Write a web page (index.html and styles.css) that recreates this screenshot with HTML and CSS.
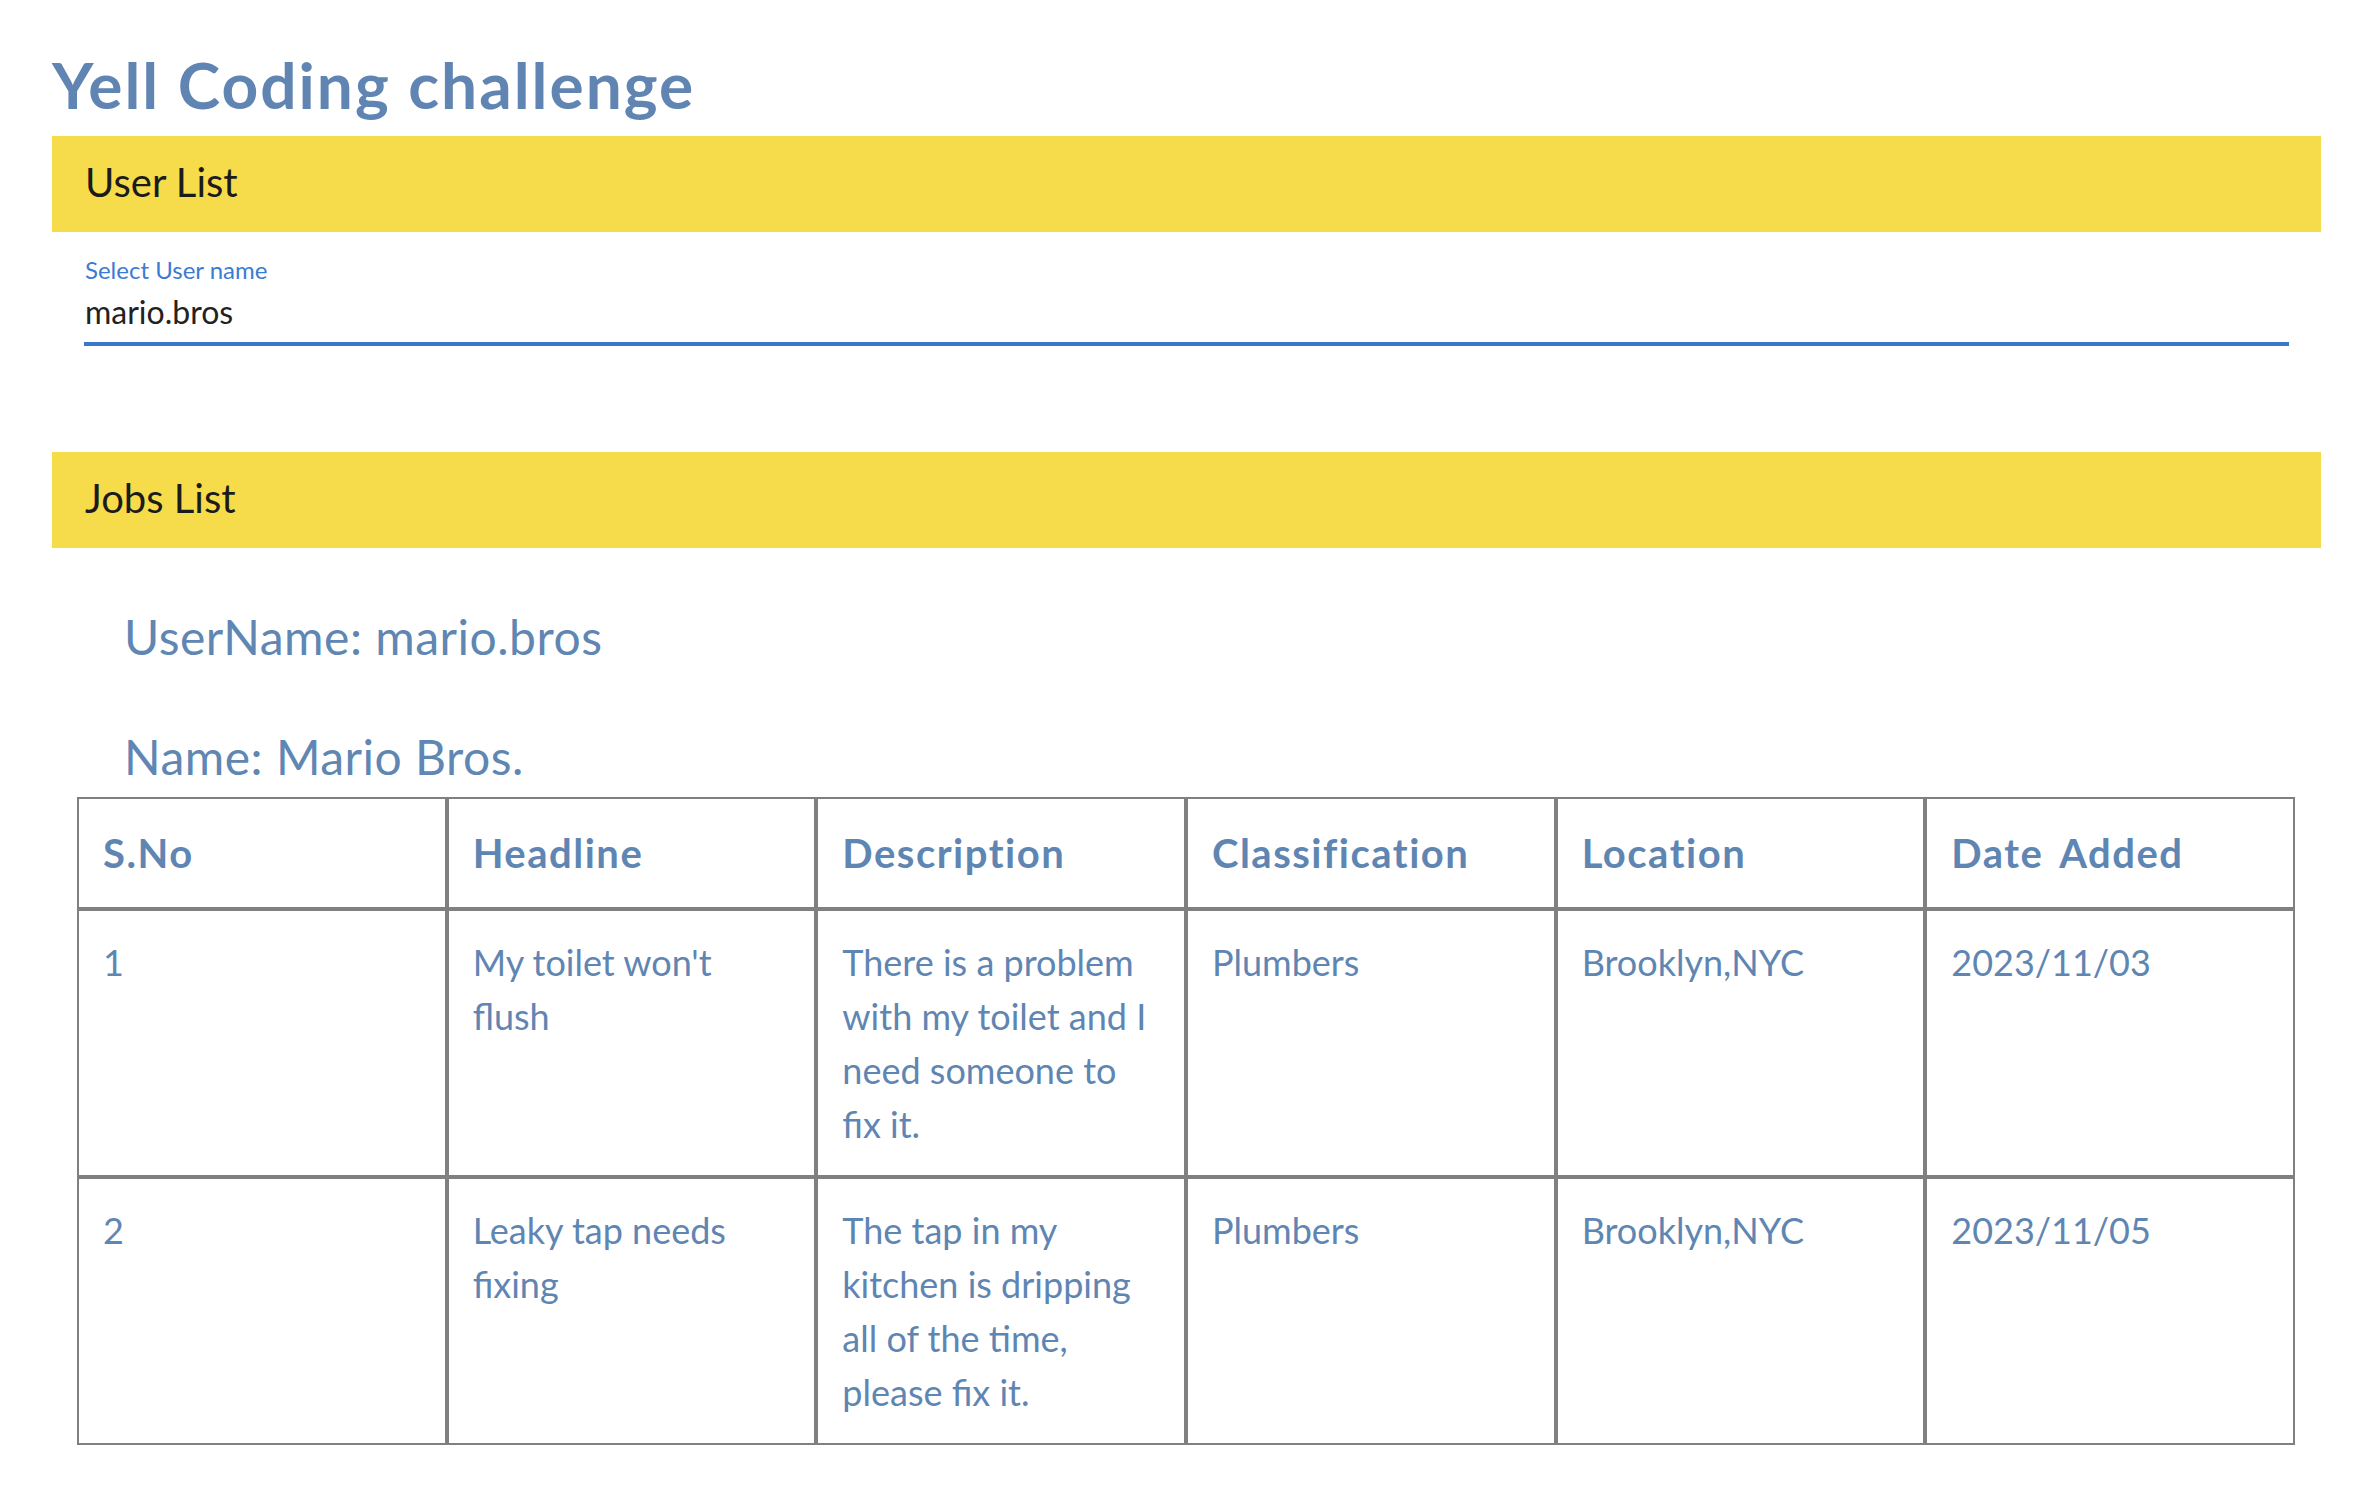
FILE: index.html
```html
<!DOCTYPE html>
<html lang="en">
<head>
<meta charset="utf-8">
<title>Yell Coding challenge</title>
<link rel="stylesheet" href="styles.css">
</head>
<body>
<main class="page">
  <h1 class="title">Yell Coding challenge</h1>

  <section class="panel">
    <div class="bar">User List</div>
    <div class="field">
      <label class="field-label">Select User name</label>
      <div class="field-input">mario.bros</div>
    </div>
  </section>

  <section class="panel panel-jobs">
    <div class="bar">Jobs List</div>
    <div class="user-info">
      <h3 class="info-line">UserName: mario.bros</h3>
      <h3 class="info-line info-name">Name: Mario Bros.</h3>
    </div>
    <table class="jobs">
      <thead>
        <tr>
          <th>S.No</th>
          <th>Headline</th>
          <th>Description</th>
          <th>Classification</th>
          <th>Location</th>
          <th>Date Added</th>
        </tr>
      </thead>
      <tbody>
        <tr>
          <td>1</td>
          <td>My toilet won't flush</td>
          <td>There is a problem with my toilet and I need someone to fix it.</td>
          <td>Plumbers</td>
          <td>Brooklyn,NYC</td>
          <td>2023/11/03</td>
        </tr>
        <tr>
          <td>2</td>
          <td>Leaky tap needs fixing</td>
          <td>The tap in my kitchen is dripping all of the time, please fix it.</td>
          <td>Plumbers</td>
          <td>Brooklyn,NYC</td>
          <td>2023/11/05</td>
        </tr>
      </tbody>
    </table>
  </section>
</main>
</body>
</html>
```

FILE: styles.css
```css
html, body {
  margin: 0;
  padding: 0;
  background: #ffffff;
}

body {
  font-family: Lato, "Noto Sans", "Liberation Sans", sans-serif;
  color: #5f86b3;
}

.page {
  padding: 46px 51px 40px 52px;
}

.title {
  margin: 0 0 13px;
  font-size: 64px;
  line-height: 77px;
  font-weight: 700;
  letter-spacing: 2px;
  word-spacing: 0;
  color: #6085b2;
}

.bar {
  box-sizing: border-box;
  height: 96px;
  padding: 16px 33px 0;
  background: #f6dc4a;
  color: #1b1b1b;
  font-size: 40px;
  line-height: 60px;
  font-weight: 400;
}

.field {
  margin: 23px 32px 0 32px;
}

.field-label {
  display: block;
  padding-left: 1px;
  font-size: 24px;
  line-height: 29px;
  color: #3b7bd4;
}

.field-input {
  margin-top: 9px;
  padding-left: 1px;
  padding-bottom: 11px;
  border-bottom: 4px solid #3a77cc;
  font-size: 32px;
  line-height: 38px;
  color: #222222;
}

.panel-jobs {
  margin-top: 106px;
}

.user-info {
  padding-left: 72px;
}

.info-line {
  margin: 60px 0 0;
  font-size: 48px;
  line-height: 58px;
  font-weight: 400;
  letter-spacing: 0.5px;
  color: #6086b3;
}

.info-name {
  margin-top: 62px;
}

.jobs {
  width: calc(100% - 51px);
  margin: 11px 26px 0 25px;
  table-layout: fixed;
  border-collapse: separate;
  border-spacing: 0;
}

.jobs th,
.jobs td {
  border: 2px solid #808080;
  padding: 24px 30px 24px 24px;
  vertical-align: top;
  text-align: left;
  color: #5f86b3;
}

.jobs th {
  font-size: 40px;
  line-height: 60px;
  font-weight: 700;
  letter-spacing: 1.5px;
  word-spacing: 6px;
}

.jobs td {
  font-size: 36px;
  line-height: 54px;
  font-weight: 400;
}
```
